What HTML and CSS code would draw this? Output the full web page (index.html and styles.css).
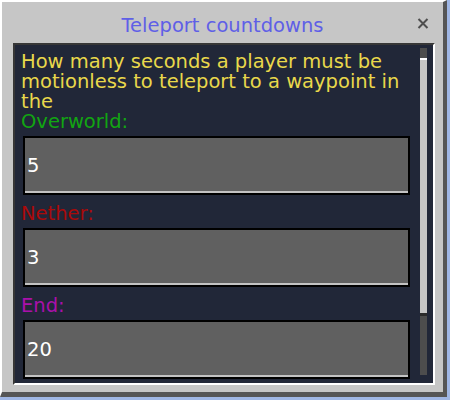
FILE: index.html
```html
<!DOCTYPE html>
<html>
<head>
<meta charset="utf-8">
<link rel="stylesheet" href="styles.css">
</head>
<body>
<div class="window">
  <div class="header">
    <div class="title">Teleport countdowns</div>
    <svg class="close" width="12" height="11" viewBox="0 0 12 11">
      <path d="M1.5 1 L10.5 10 M10.5 1 L1.5 10" stroke="#4e4e4e" stroke-width="2" fill="none"/>
    </svg>
  </div>
  <div class="panel">
    <div class="content">
      <p class="desc">How many seconds a player must be motionless to teleport to a waypoint in the</p>
      <div class="label overworld">Overworld:</div>
      <input class="field" type="text" value="5">
      <div class="label nether">Nether:</div>
      <input class="field" type="text" value="3">
      <div class="label end">End:</div>
      <input class="field" type="text" value="20">
    </div>
    <div class="scrollbar"><div class="thumb"></div></div>
  </div>
</div>
</body>
</html>
```
FILE: styles.css
```css
* { box-sizing: border-box; }
html, body { margin: 0; padding: 0; }
body {
  background: #9fb6e4;
  width: 450px;
  height: 400px;
  overflow: hidden;
  font-family: "DejaVu Sans", sans-serif;
  font-size: 19.5px;
}
.window {
  width: 447px;
  height: 397px;
  background: #c6c6c6;
  border-style: solid;
  border-color: #ffffff #555555 #555555 #ffffff;
  border-width: 2px 4px 5px 2px;
  display: flex;
  flex-direction: column;
}
.header {
  height: 41px;
  flex: none;
  display: grid;
  grid-template-columns: 1fr auto 1fr;
  align-items: start;
  padding-top: 12px;
}
.title {
  grid-column: 2;
  color: #5f5fe6;
  line-height: 23px;
  white-space: nowrap;
}
.close {
  grid-column: 3;
  justify-self: end;
  margin-right: 14px;
  margin-top: 4px;
}
.panel {
  margin-left: 11px;
  width: 422px;
  height: 342px;
  flex: none;
  background: #212738;
  border-style: solid;
  border-color: #373737 #ffffff #ffffff #373737;
  border-width: 2px;
  display: flex;
  gap: 10px;
  padding: 3px 6px 0 6px;
  overflow: hidden;
}
.content {
  width: 389px;
  flex: none;
  padding-top: 4px;
}
.desc {
  margin: 0;
  color: #e9d84b;
  line-height: 20px;
}
.label {
  line-height: 20px;
  margin: 9px 0 4px;
}
.overworld { margin-top: 0; color: #12a512; }
.nether { color: #aa0a0a; }
.end { color: #aa10aa; }
.field {
  display: block;
  width: 387px;
  height: 59px;
  margin: 0 0 0 2px;
  padding: 0 0 0 2px;
  border: 2px solid #000000;
  background: #606060;
  color: #ffffff;
  font-family: inherit;
  font-size: inherit;
  box-shadow: inset 0 -2px 0 #c3c3c3;
  outline: none;
  border-radius: 0;
}
.scrollbar {
  width: 7px;
  height: 327px;
  flex: none;
  background: #4d4d4d;
  padding-top: 10px;
}
.thumb {
  height: 258px;
  background: #c6c6c6;
  border-top: 2px solid #ffffff;
  border-bottom: 3px solid #2b2b2b;
}
```
